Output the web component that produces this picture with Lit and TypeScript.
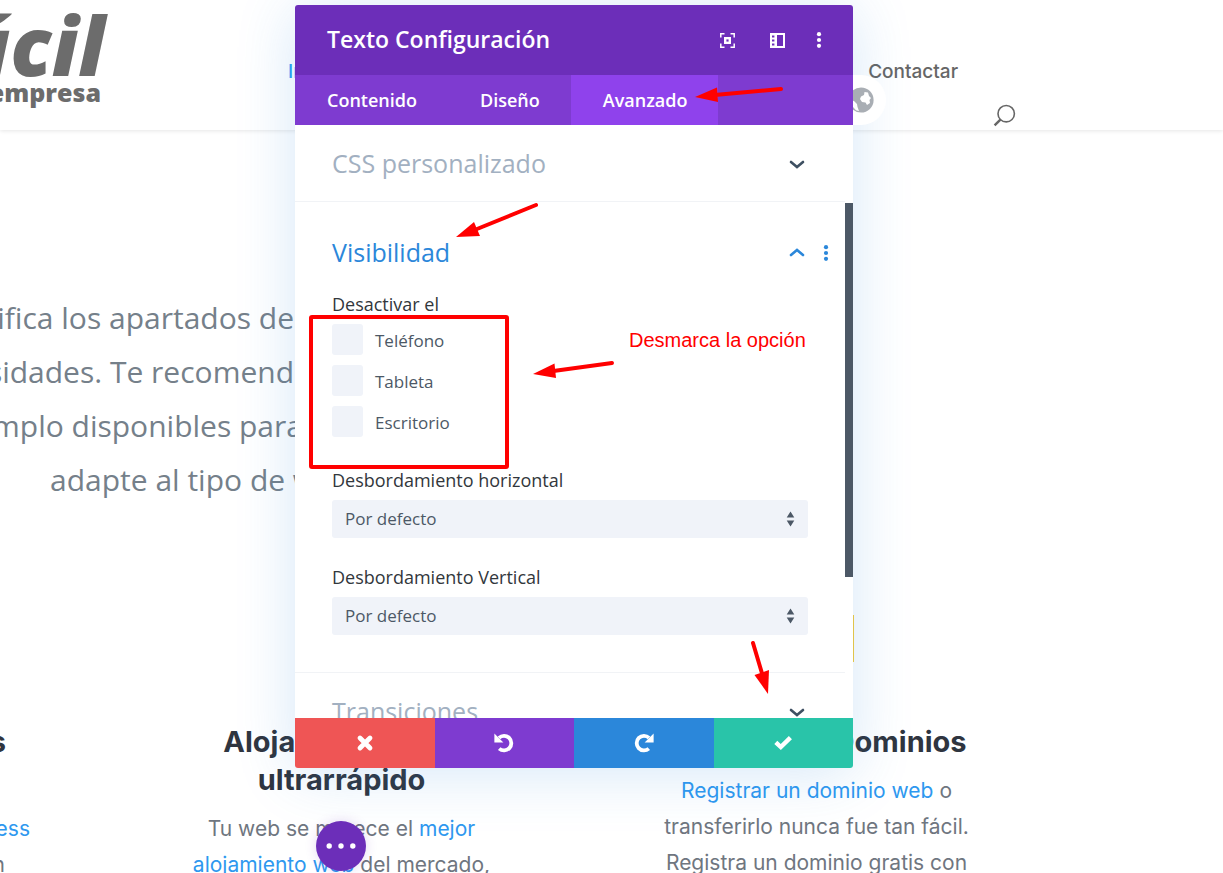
import { LitElement, html, css, svg } from "lit";
import { customElement, property, state } from "lit/decorators.js";
import { classMap } from "lit/directives/class-map.js";

const chevron = (up: boolean) => html`<svg width="16" height="10" viewBox="0 0 16 10" aria-hidden="true">
  <path d=${up ? "M2 7 8 2l6 5" : "M2 3 8 8l6-5"} fill="none" stroke="currentColor" stroke-width="2.6" stroke-linecap="round" />
</svg>`;

const dotsV = html`<svg width="6" height="18" viewBox="0 0 6 18" aria-hidden="true">
  <g fill="currentColor"><circle cx="3" cy="3.2" r="2.1" /><circle cx="3" cy="9" r="2.1" /><circle cx="3" cy="14.8" r="2.1" /></g>
</svg>`;

@customElement("settings-modal")
export class SettingsModal extends LitElement {
  static styles = css`
    :host {
      display: flex;
      flex-direction: column;
      height: 763px;
      border-radius: 3px;
      background: #fff;
      box-shadow: 0 5px 60px rgba(43, 135, 218, 0.2);
      font-family: "Open Sans", "Noto Sans", sans-serif;
      overflow: hidden;
    }
    button {
      border: 0;
      padding: 0;
      background: none;
      color: inherit;
      font: inherit;
      cursor: pointer;
    }
    svg { display: block; }
    .head {
      display: flex;
      align-items: center;
      height: 70px;
      flex: none;
      padding: 0 31px 0 32px;
      background: #6c2eb9;
      color: #fff;
    }
    .head h2 {
      flex: 1;
      margin: 0;
      padding-bottom: 2px;
      font-size: 23px;
      font-weight: 600;
      line-height: 32px;
    }
    .tools { display: flex; align-items: center; }
    .tools button { margin-left: 33px; }
    .tools button:last-child { margin-left: 30px; }
    .tabs {
      display: flex;
      flex: none;
      height: 50px;
      background: #7e3bd0;
      color: #fff;
      font-size: 18px;
      font-weight: 600;
    }
    .tabs button { padding: 0 31px 0 32px; }
    .tabs .on { background: #8f42ec; }
    .body {
      flex: 1;
      min-height: 0;
      overflow: hidden;
      display: grid;
      grid-template-columns: 1fr 8px;
    }
    .thumb {
      margin-top: 78px;
      height: 374px;
      background: #4c5866;
    }
    .section {
      padding: 0 37px;
      border-bottom: 1px solid #f1f3f6;
    }
    .section:last-child { border-bottom: 0; }
    .bar {
      display: flex;
      align-items: center;
      height: 76px;
      color: #3e5062;
    }
    .bar h3 {
      flex: 1;
      margin: 0;
      font-size: 25px;
      font-weight: 400;
      line-height: 34px;
      color: #a2b0c1;
    }
    .bar.open { padding-top: 12px; color: #2b87da; }
    .bar.open h3 { color: #2b87da; }
    .bar button { flex: none; padding-top: 2px; }
    .more { width: 6px; margin: 0 -21px 0 15px; }
    .chev { margin-right: 3px; }
    .fields { padding: 2px 0 37px; }
    fieldset {
      border: 0;
      margin: 0;
      padding: 0;
      min-width: 0;
    }
    .name {
      display: block;
      padding: 0;
      font-size: 18px;
      font-weight: 500;
      line-height: 24px;
      color: #32373c;
    }
    .checks {
      display: grid;
      gap: 10px;
      margin: 8px 0 31px;
    }
    .check {
      display: flex;
      align-items: center;
      gap: 12px;
      font-size: 17px;
      font-weight: 500;
      line-height: 24px;
      color: #4c5866;
    }
    .check input {
      appearance: none;
      width: 31px;
      height: 31px;
      margin: 0;
      border-radius: 3px;
      background: #f0f3f9;
    }
    .check span { padding-top: 3px; }
    .select {
      display: grid;
      align-items: center;
      margin: 8px 0 27px;
    }
    .select > * { grid-area: 1 / 1; }
    .select:last-child { margin-bottom: 0; }
    select {
      appearance: none;
      width: 100%;
      height: 38px;
      padding: 0 13px 2px;
      border: 0;
      border-radius: 3px;
      background: #f0f3f9;
      color: #4c5866;
      font: 500 17px "Open Sans", "Noto Sans", sans-serif;
    }
    .select svg { justify-self: end; margin-right: 13px; pointer-events: none; }
    .foot {
      display: grid;
      grid-template-columns: repeat(4, 1fr);
      height: 50px;
      flex: none;
      color: #fff;
    }
    .foot button { display: grid; place-items: center; }
    .cancel { background: #ef5555; }
    .undo { background: #7e3bd0; }
    .redo { background: #2b87da; }
    .save { background: #29c4a9; }
  `;

  @property() heading = "";
  @state() private tab = "Avanzado";

  private select(id: string, label: string) {
    return html`<label class="name" for=${id}>${label}</label>
      <div class="select">
        <select id=${id}><option>Por defecto</option></select>
        <svg width="9" height="16" viewBox="0 0 9 16" aria-hidden="true">
          <path d="M4.5.5 8.3 6.5H.7zM4.5 15.5.7 9.5h7.6z" fill="#4c5866" />
        </svg>
      </div>`;
  }

  render() {
    return html`
      <header class="head">
        <h2>${this.heading}</h2>
        <div class="tools">
          <button aria-label="Expandir">
            <svg width="17" height="17" viewBox="0 0 17 17" fill="none" stroke="#fff">
              <path d="M1.8 5.5V1.8h3.7M11.5 1.8h3.7v3.7M15.2 11.5v3.7h-3.7M5.5 15.2H1.8v-3.7" stroke-width="1.5" />
              <rect x="6.2" y="6.2" width="4.6" height="4.6" stroke-width="2.4" />
            </svg>
          </button>
          <button aria-label="Acoplar">
            <svg width="17" height="17" viewBox="0 0 17 17">
              <path fill="#fff" fill-rule="evenodd" d="M1 1h15v15H1zM8 3v11h6V3zM3 3.4v2h2.4v-2zM3 7.4v2h2.4v-2zM3 11.4v2h2.4v-2z" />
            </svg>
          </button>
          <button aria-label="Más opciones">${dotsV}</button>
        </div>
      </header>
      <nav class="tabs" role="tablist">
        ${["Contenido", "Diseño", "Avanzado"].map(
          (t) => html`<button role="tab" class=${classMap({ on: this.tab === t })}
            aria-selected=${this.tab === t} @click=${() => (this.tab = t)}>${t}</button>`
        )}
      </nav>
      <div class="body">
        <div>
          <section class="section">
            <div class="bar"><h3>CSS personalizado</h3><button class="chev" aria-label="Abrir">${chevron(false)}</button></div>
          </section>
          <section class="section">
            <div class="bar open">
              <h3>Visibilidad</h3>
              <button class="chev" aria-label="Cerrar">${chevron(true)}</button>
              <button class="more" aria-label="Opciones">${dotsV}</button>
            </div>
            <div class="fields">
              <fieldset>
                <legend class="name">Desactivar el</legend>
                <div class="checks">
                  ${["Teléfono", "Tableta", "Escritorio"].map(
                    (c) => html`<label class="check"><input type="checkbox" /><span>${c}</span></label>`
                  )}
                </div>
              </fieldset>
              ${this.select("ox", "Desbordamiento horizontal")}
              ${this.select("oy", "Desbordamiento Vertical")}
            </div>
          </section>
          <section class="section">
            <div class="bar"><h3>Transiciones</h3><button class="chev" aria-label="Abrir">${chevron(false)}</button></div>
          </section>
        </div>
        <div class="thumb"></div>
      </div>
      <footer class="foot">
        <button class="cancel" aria-label="Descartar">
          <svg width="18" height="18" viewBox="0 0 18 18"><path d="M4 4l10 10M14 4 4 14" stroke="#fff" stroke-width="4.8" stroke-linecap="round" /></svg>
        </button>
        <button class="undo" aria-label="Deshacer">
          <svg width="20" height="20" viewBox="0 0 20 20">
            <path d="M5 4.800A7.300 7.300 0 1 1 5.200 15.600" fill="none" stroke="#fff" stroke-width="3.800" />
            <path d="M.400.600v9h9z" fill="#fff" />
          </svg>
        </button>
        <button class="redo" aria-label="Rehacer">
          <svg width="20" height="20" viewBox="0 0 20 20">
            <path d="M15 4.800A7.300 7.300 0 1 0 14.800 15.600" fill="none" stroke="#fff" stroke-width="3.800" />
            <path d="M19.600.600v9h-9z" fill="#fff" />
          </svg>
        </button>
        <button class="save" aria-label="Guardar">
          <svg width="20" height="18" viewBox="0 0 20 18"><path d="M2.8 8.400 7.800 13 17.400 3.600" fill="none" stroke="#fff" stroke-width="4.4" /></svg>
        </button>
      </footer>
    `;
  }
}

/** An annotation arrow: shaft from the tail to the middle of the head's base, then a filled head. */
const arrow = (tail: number[], tip: number[], a: number[], b: number[]) => svg`
  <path d="M${tail[0]} ${tail[1]}L${(a[0] + b[0]) / 2} ${(a[1] + b[1]) / 2}" stroke="#f00" stroke-width="4" stroke-linecap="round" />
  <path d="M${tip[0]} ${tip[1]}L${a[0]} ${a[1]}L${b[0]} ${b[1]}z" fill="#f00" />`;

@customElement("app-root")
export class AppRoot extends LitElement {
  static styles = css`
    :host {
      display: block;
      position: relative;
      min-height: 100vh;
      overflow: hidden;
      background: #fff;
      color: #6f7680;
      font-family: Inter, sans-serif;
      box-sizing: border-box;
    }
    svg { display: block; }
    a { text-decoration: none; color: #2e98ef; }
    .top {
      display: flex;
      height: 130px;
      padding-right: 207px;
      box-shadow: 0 1px 4px rgba(0, 0, 0, 0.1);
    }
    .logo {
      display: flex;
      flex-direction: column;
      align-items: flex-end;
      width: 108px;
      margin-right: 180px;
      padding-top: 5px;
      box-sizing: border-box;
      flex: none;
      color: #6c6c6c;
      font-family: "Open Sans", sans-serif;
      font-weight: 800;
      white-space: nowrap;
    }
    .brand { padding-right: 3px; font-size: 82px; line-height: 78px; font-style: italic; }
    .sub { padding-right: 7px; font-size: 25px; line-height: 18px; }
    .menu {
      flex: 1;
      display: flex;
      justify-content: space-between;
      padding-top: 60px;
      font-size: 19px;
      font-weight: 500;
      line-height: 24px;
    }
    .menu a { color: #666; }
    .menu .here { color: #2ea3f2; }
    .find {
      align-self: flex-end;
      margin: 0 0 3px 35px;
      padding: 0;
      border: 0;
      background: none;
    }
    .hero {
      padding-top: 161px;
      font-family: "Open Sans", sans-serif;
      font-size: 30px;
      line-height: 54px;
      color: #75808a;
      white-space: nowrap;
    }
    .hero p { margin: 0 0 0 -8px; }
    .hero .flush { display: flex; justify-content: flex-end; width: 302px; }
    .hero .last { margin-left: 50px; }
    .cta {
      display: block;
      width: 152px;
      height: 47px;
      margin: 108px 0 0 702px;
      background: #f4cb3c;
    }
    .services {
      display: grid;
      grid-template-columns: 104px 475px 475px;
      margin-top: 61px;
      text-align: center;
      font-size: 21px;
      line-height: 36px;
      white-space: nowrap;
    }
    .services h2 {
      margin: 0 0 12px;
      min-height: 76px;
      font-size: 29px;
      font-weight: 700;
      line-height: 38px;
      color: #2f353f;
    }
    .services p { margin: 0; }
    .services .short h2 { min-height: 38px; }
    .cut { display: flex; justify-content: flex-end; }
    .cut.t { width: 6px; }
    .cut.l { width: 30px; }
    .cut.n { width: 5px; }
    .globe {
      position: absolute;
      left: 853px;
      top: 75px;
      display: flex;
      align-items: center;
      justify-content: flex-end;
      width: 33px;
      height: 50px;
      padding: 0 12px 0 0;
      border: 0;
      box-sizing: border-box;
      border-radius: 0 25px 25px 0;
      background: #fff;
      overflow: hidden;
    }
    .globe svg { flex: none; }
    settings-modal {
      position: absolute;
      left: 295px;
      top: 5px;
      width: 558px;
    }
    .fab {
      position: absolute;
      left: 316px;
      top: 821px;
      display: grid;
      place-items: center;
      width: 50px;
      height: 50px;
      padding: 0;
      border: 0;
      border-radius: 25px;
      background: #6c2eb9;
      box-shadow: 0 0 12px rgba(108, 46, 185, 0.18);
    }
    .marks {
      position: absolute;
      left: 0;
      top: 0;
      pointer-events: none;
    }
    .frame {
      position: absolute;
      left: 309px;
      top: 315px;
      width: 200px;
      height: 154px;
      box-sizing: border-box;
      border: 4px solid #f00;
      border-radius: 3px;
      pointer-events: none;
    }
    .note {
      position: absolute;
      left: 629px;
      top: 328px;
      font: 20px/24px "Liberation Sans", Arial, sans-serif;
      color: #f00;
      white-space: nowrap;
    }
  `;

  render() {
    return html`
      <header class="top">
        <div class="logo"><span class="brand">ácil</span><span class="sub">empresa</span></div>
        <nav class="menu"><a class="here" href="#">Inicio</a><a href="#">Contactar</a></nav>
        <button class="find" aria-label="Buscar">
          <svg width="23" height="23" viewBox="0 0 23 23" fill="none" stroke="#666">
            <circle cx="13.2" cy="9.7" r="8.2" stroke-width="1.6" />
            <path d="M7.4 15.6 1.6 21.4" stroke-width="2.4" />
          </svg>
        </button>
      </header>
      <main>
        <section class="hero">
          <p class="flush">ifica los apartados de</p>
          <p class="flush">sidades. Te recomend</p>
          <p>mplo disponibles para</p>
          <p class="last">adapte al tipo de w</p>
          <a class="cta" href="#" aria-label="Empezar"></a>
        </section>
        <section class="services">
          <article>
            <h2><span class="cut t">s</span></h2>
            <p class="cut l"><a href="#">ess</a></p>
            <p class="cut n">n</p>
          </article>
          <article>
            <h2>Alojamiento web<br />ultrarrápido</h2>
            <p>Tu web se merece el <a href="#">mejor</a><br /><a href="#">alojamiento web</a> del mercado,</p>
          </article>
          <article class="short">
            <h2>Registro de Dominios</h2>
            <p><a href="#">Registrar un dominio web</a> o<br />transferirlo nunca fue tan fácil.<br />Registra un dominio gratis con</p>
          </article>
        </section>
      </main>
      <settings-modal heading="Texto Configuración"></settings-modal>
      <button class="globe" aria-label="Vista">
        <svg width="26" height="26" viewBox="0 0 26 26">
          <circle cx="13" cy="13" r="12.6" fill="#a9aeb4" />
          <path fill="#fff" d="M13 9.5 16 8l.5-3L20 5.500l1 3.500 2 2-1.500 2 .5 3-3 2-1.500-2.500L14 15l-2-3zM2 13l4 1 3 3 .5 3 1.500 4-3-.8-3-3.200-3-4z" />
        </svg>
      </button>
      <button class="fab" aria-label="Menú">
        <svg width="30" height="6" viewBox="0 0 30 6" fill="#fff">
          <circle cx="3.200" cy="3" r="2.700" /><circle cx="15" cy="3" r="2.700" /><circle cx="26.800" cy="3" r="2.700" />
        </svg>
      </button>
      <div class="frame"></div>
      <span class="note">Desmarca la opción</span>
      <svg class="marks" width="1000" height="800" viewBox="0 0 1000 800" aria-hidden="true">
        ${arrow([781, 89], [695, 97], [717, 87.5], [718, 102])}
        ${arrow([536, 205], [456, 237], [474, 222], [480, 236])}
        ${arrow([612, 363], [533, 374], [554.5, 363.5], [556, 378])}
        ${arrow([753, 643], [768, 694], [754.5, 675], [769, 670])}
      </svg>
    `;
  }
}
